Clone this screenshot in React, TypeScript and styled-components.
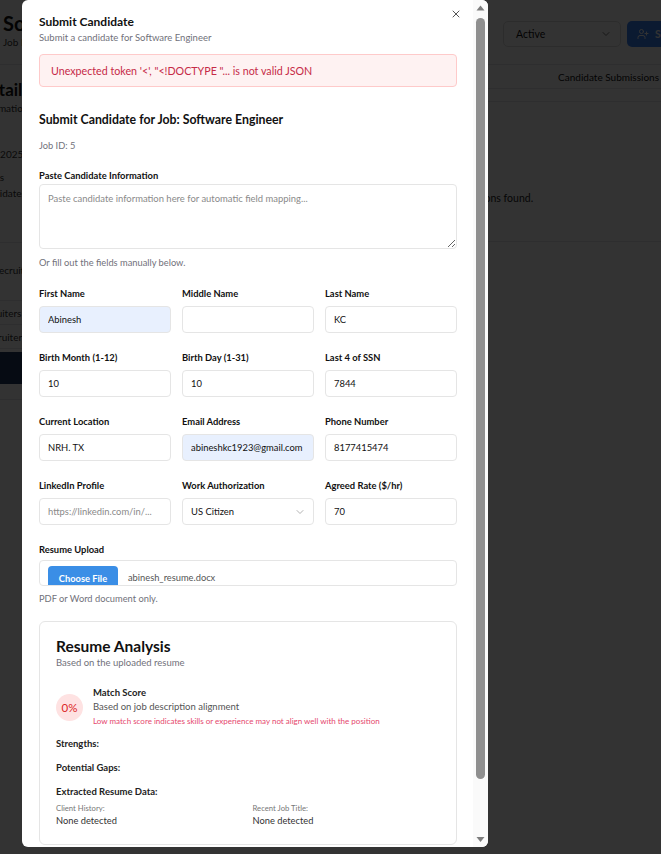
import React from "react";
import styled, { createGlobalStyle } from "styled-components";
import { X, ChevronDown, UserPlus } from "lucide-react";

const FONT = `"Lato", "Noto Sans", "Liberation Sans", sans-serif`;

const Global = createGlobalStyle`
  html, body { margin: 0; padding: 0; }
  body { font-family: ${FONT}; color: #111; background: #fff; }
  * { box-sizing: border-box; }
`;

/* ---------- background page (behind the overlay) ---------- */
const BgPage = styled.div`
  width: 661px;
  height: 854px;
  overflow: hidden;
  background: #fff;
  color: #111;
`;
const BgHeader = styled.header`
  display: flex;
  align-items: flex-start;
  height: 65px;
  padding: 12px 0 0 3px;
  border-bottom: 1px solid #e5e7eb;
`;
const BgTitleBlock = styled.div`
  flex: 1;
  min-width: 0;
`;
const BgTitle = styled.h1`
  margin: 0;
  font-size: 20px;
  line-height: 22px;
  font-weight: 700;
  white-space: nowrap;
`;
const BgSub = styled.div`
  margin-top: 1px;
  font-size: 10px;
  line-height: 14px;
  color: #333;
`;
const BgControls = styled.div`
  display: flex;
  gap: 6px;
  margin: 9px -106px 0 0;
`;
const BgSelect = styled.div`
  width: 118px;
  height: 26px;
  border: 1px solid #ddd;
  border-radius: 5px;
  display: flex;
  align-items: center;
  justify-content: space-between;
  padding: 0 8px 0 12px;
  font-size: 10.5px;
  color: #111;
  svg {
    color: #777;
  }
`;
const BgButton = styled.div`
  width: 140px;
  height: 26px;
  border-radius: 5px;
  background: #3b82f6;
  color: #fff;
  display: flex;
  align-items: center;
  gap: 6px;
  padding-left: 10px;
  font-size: 10.5px;
  font-weight: 700;
`;
const BgBody = styled.div`
  display: flex;
`;
const BgLeft = styled.div`
  flex: none;
  width: 320px;
  margin-left: -23px;
  display: flex;
  flex-direction: column;
`;
const BgRight = styled.div`
  flex: none;
  width: 400px;
  display: flex;
  flex-direction: column;
`;
const BgHeading = styled.h2`
  margin: 14px 0 0;
  font-size: 17px;
  line-height: 22px;
  font-weight: 700;
`;
const BgText = styled.div<{ $mt?: number; $indent?: number }>`
  margin-top: ${(p) => p.$mt ?? 0}px;
  padding-left: ${(p) => p.$indent ?? 0}px;
  font-size: 10px;
  line-height: 14px;
  color: #333;
  white-space: nowrap;
`;
const BgDivider = styled.div<{ $mt?: number }>`
  margin-top: ${(p) => p.$mt ?? 0}px;
  border-top: 1px solid #e5e7eb;
`;
const BgRow = styled.div<{ $indent?: number }>`
  height: 24px;
  display: flex;
  align-items: center;
  gap: 6px;
  padding-left: ${(p) => p.$indent ?? 0}px;
  border-bottom: 1px solid #e5e7eb;
  font-size: 10px;
  color: #333;
  white-space: nowrap;
`;
const BgAvatar = styled.div`
  width: 22px;
  height: 22px;
  border-radius: 50%;
  border: 1px solid #ccc;
`;
const BgBlueBar = styled.div`
  margin-top: 3px;
  height: 32px;
  background: #1e3a5f;
`;
const BgTabs = styled.div`
  height: 24px;
  display: flex;
  justify-content: flex-end;
  align-items: center;
  gap: 110px;
  padding-right: 38px;
  border-bottom: 1px solid #e5e7eb;
  font-size: 10px;
  white-space: nowrap;
`;
const BgPanel = styled.div`
  margin-top: 12px;
  height: 141px;
  border-top: 1px solid #e5e7eb;
  border-bottom: 1px solid #e5e7eb;
  padding: 88px 0 0 132px;
  font-size: 10.5px;
  line-height: 16px;
  color: #222;
  white-space: nowrap;
`;

/* ---------- modal ---------- */
const Overlay = styled.div`
  position: fixed;
  inset: 0;
  background: rgba(0, 0, 0, 0.8);
  z-index: 10;
`;
const Dialog = styled.div`
  position: fixed;
  left: 22px;
  top: 0;
  width: 466px;
  height: 847px;
  background: #fff;
  border-radius: 6px;
  overflow: hidden;
  z-index: 11;
  display: flex;
`;
const DialogBody = styled.div`
  position: relative;
  flex: 1;
  min-width: 0;
  overflow: hidden;
  padding: 13px 16px 16px 17px;
`;
const ScrollBar = styled.div`
  flex: none;
  width: 15px;
  display: flex;
  flex-direction: column;
  background: #fafafa;
`;
const ScrollArrow = styled.div`
  flex: none;
  height: 15px;
  display: flex;
`;
const ScrollTrack = styled.div`
  flex: 1;
  padding-top: 3px;
`;
const ScrollThumb = styled.div`
  width: 9px;
  height: 761px;
  margin: 0 3px;
  border-radius: 4.5px;
  background: #8f8f8f;
`;
const CloseButton = styled.button`
  position: absolute;
  top: 8px;
  right: 11px;
  width: 12px;
  height: 12px;
  padding: 0;
  border: 0;
  background: none;
  color: #555;
  display: flex;
`;
const DialogTitle = styled.h2`
  margin: 0;
  font-size: 12px;
  line-height: 17px;
  font-weight: 700;
  color: #111;
`;
const DialogDesc = styled.p`
  margin: 1px 0 0;
  font-size: 9.5px;
  line-height: 14px;
  color: #71717a;
`;
const ErrorBox = styled.div`
  margin-top: 9px;
  padding: 8px 11px;
  background: #fef2f2;
  border: 1px solid #fecaca;
  border-radius: 4px;
  font-size: 10.7px;
  line-height: 15px;
  color: #c62a47;
`;
const SectionTitle = styled.h3`
  margin: 24px 0 0;
  font-size: 12.3px;
  line-height: 18px;
  font-weight: 700;
  color: #111;
`;
const Muted = styled.p<{ $mt: number }>`
  margin: ${(p) => p.$mt}px 0 0;
  font-size: 9.3px;
  line-height: 14px;
  color: #71717a;
`;
const FieldLabel = styled.label`
  display: block;
  font-size: 9.4px;
  line-height: 14px;
  font-weight: 700;
  color: #111;
`;
const PasteBlock = styled.div`
  margin-top: 16px;
  display: flex;
  flex-direction: column;
  gap: 1px;
`;
const TextArea = styled.textarea`
  display: block;
  width: 100%;
  height: 65px;
  padding: 7px 8px;
  border: 1px solid #e5e5e5;
  border-radius: 4px;
  font-family: ${FONT};
  font-size: 9.45px;
  line-height: 14px;
  color: #111;
  resize: vertical;
  outline: none;
  &::placeholder {
    color: #8a8a8a;
  }
`;
const FormGrid = styled.div`
  margin-top: 17px;
  display: grid;
  grid-template-columns: repeat(3, 1fr);
  column-gap: 11px;
  row-gap: 18px;
`;
const Field = styled.div`
  display: flex;
  flex-direction: column;
  gap: 5px;
  min-width: 0;
`;
const Input = styled.input<{ $autofill?: boolean }>`
  display: block;
  width: 100%;
  height: 27px;
  padding: 0 8px;
  border: 1px solid #e5e5e5;
  border-radius: 4px;
  background: ${(p) => (p.$autofill ? "#e8f0fe" : "#fff")};
  font-family: ${FONT};
  font-size: 9.4px;
  color: #111;
  outline: none;
  &::placeholder {
    color: #8a8a8a;
  }
`;
const SelectBox = styled.div`
  height: 27px;
  display: flex;
  align-items: center;
  justify-content: space-between;
  padding: 0 7px 0 8px;
  border: 1px solid #e5e5e5;
  border-radius: 4px;
  font-size: 9.4px;
  color: #111;
  svg {
    color: #9a9a9a;
  }
`;
const UploadBlock = styled.div`
  margin-top: 18px;
  display: flex;
  flex-direction: column;
  gap: 3px;
`;
const FileBox = styled.div`
  height: 26px;
  display: flex;
  align-items: flex-start;
  gap: 10px;
  padding: 5px 0 0 8px;
  border: 1px solid #e5e5e5;
  border-radius: 4px;
  overflow: hidden;
`;
const FileButton = styled.span`
  flex: none;
  width: 70px;
  height: 24px;
  display: flex;
  align-items: center;
  justify-content: center;
  background: #3a8ee6;
  border-radius: 4px;
  color: #fff;
  font-size: 9.3px;
  font-weight: 700;
`;
const FileName = styled.span`
  line-height: 24px;
  font-size: 9.3px;
  color: #555;
`;
const Card = styled.section`
  margin-top: 15px;
  padding: 14px 16px 16px;
  border: 1px solid #e5e5e5;
  border-radius: 6px;
`;
const CardTitle = styled.h3`
  margin: 0;
  font-size: 15.5px;
  line-height: 20px;
  font-weight: 700;
  color: #111;
`;
const CardDesc = styled.p`
  margin: 0;
  font-size: 9.5px;
  line-height: 14px;
  color: #71717a;
`;
const ScoreRow = styled.div`
  margin-top: 16px;
  display: flex;
  align-items: center;
  gap: 10px;
`;
const ScoreCircle = styled.div`
  flex: none;
  width: 27px;
  height: 27px;
  border-radius: 50%;
  background: #fee2e2;
  color: #dc2626;
  display: flex;
  align-items: center;
  justify-content: center;
  font-size: 11.5px;
`;
const ScoreText = styled.div`
  display: flex;
  flex-direction: column;
`;
const ScoreTitle = styled.div`
  font-size: 9.5px;
  line-height: 14px;
  font-weight: 700;
  color: #222;
`;
const ScoreDesc = styled.div`
  font-size: 9.5px;
  line-height: 14px;
  color: #555;
`;
const ScoreWarn = styled.div`
  font-size: 8px;
  line-height: 14px;
  color: #e5486d;
  white-space: nowrap;
`;
const AnalysisLabel = styled.div<{ $mt: number }>`
  margin-top: ${(p) => p.$mt}px;
  font-size: 9.5px;
  line-height: 14px;
  font-weight: 700;
  color: #222;
`;
const DataGrid = styled.div`
  margin-top: 4px;
  display: grid;
  grid-template-columns: 1fr 1fr;
  column-gap: 9px;
`;
const DataKey = styled.div`
  font-size: 7.7px;
  line-height: 11px;
  color: #777;
`;
const DataValue = styled.div`
  font-size: 9.3px;
  line-height: 14px;
  color: #333;
`;
const Footer = styled.div`
  margin-top: 16px;
  display: flex;
  justify-content: flex-end;
  gap: 8px;
`;
const FooterButton = styled.button<{ $primary?: boolean }>`
  height: 32px;
  padding: 0 14px;
  border-radius: 5px;
  border: 1px solid ${(p) => (p.$primary ? "#3a8ee6" : "#e5e5e5")};
  background: ${(p) => (p.$primary ? "#3a8ee6" : "#fff")};
  color: ${(p) => (p.$primary ? "#fff" : "#111")};
  font-family: ${FONT};
  font-size: 10px;
  font-weight: 700;
`;

type FieldDef =
  | { kind: "input"; label: string; value?: string; placeholder?: string; autofill?: boolean }
  | { kind: "select"; label: string; value: string };

const fields: FieldDef[] = [
  { kind: "input", label: "First Name", value: "Abinesh", autofill: true },
  { kind: "input", label: "Middle Name", value: "" },
  { kind: "input", label: "Last Name", value: "KC" },
  { kind: "input", label: "Birth Month (1-12)", value: "10" },
  { kind: "input", label: "Birth Day (1-31)", value: "10" },
  { kind: "input", label: "Last 4 of SSN", value: "7844" },
  { kind: "input", label: "Current Location", value: "NRH. TX" },
  { kind: "input", label: "Email Address", value: "abineshkc1923@gmail.com", autofill: true },
  { kind: "input", label: "Phone Number", value: "8177415474" },
  { kind: "input", label: "LinkedIn Profile", placeholder: "https://linkedin.com/in/..." },
  { kind: "select", label: "Work Authorization", value: "US Citizen" },
  { kind: "input", label: "Agreed Rate ($/hr)", value: "70" },
];

function Background() {
  return (
    <BgPage>
      <BgHeader>
        <BgTitleBlock>
          <BgTitle>Software Engineer</BgTitle>
          <BgSub>Job ID: 5</BgSub>
        </BgTitleBlock>
        <BgControls>
          <BgSelect>
            Active <ChevronDown size={12} />
          </BgSelect>
          <BgButton>
            <UserPlus size={12} /> Submit Candidate
          </BgButton>
        </BgControls>
      </BgHeader>
      <BgBody>
        <BgLeft>
          <BgHeading>Details</BgHeading>
          <BgText>Information about this job</BgText>
          <BgText $mt={32}>June 2025</BgText>
          <BgText $mt={9}>Status</BgText>
          <BgText $mt={2}>Candidates</BgText>
          <BgDivider $mt={42} />
          <BgText $mt={20} $indent={16}>Recruiters</BgText>
          <BgRow $indent={1}>
            <BgAvatar />
          </BgRow>
          <BgRow>Recruiters</BgRow>
          <BgRow $indent={5}>Recruiter</BgRow>
          <BgBlueBar />
          <BgDivider $mt={15} />
        </BgLeft>
        <BgRight>
          <BgTabs>
            <span>Overview</span>
            <span>Candidate Submissions</span>
          </BgTabs>
          <BgPanel>No submissions found.</BgPanel>
        </BgRight>
      </BgBody>
    </BgPage>
  );
}

export default function App() {
  return (
    <>
      <Global />
      <Background />
      <Overlay />
      <Dialog role="dialog">
        <DialogBody>
          <CloseButton aria-label="Close">
            <X size={12} strokeWidth={2} />
          </CloseButton>
          <DialogTitle>Submit Candidate</DialogTitle>
          <DialogDesc>Submit a candidate for Software Engineer</DialogDesc>
          <ErrorBox>Unexpected token '&lt;', "&lt;!DOCTYPE "... is not valid JSON</ErrorBox>

          <SectionTitle>Submit Candidate for Job: Software Engineer</SectionTitle>
          <Muted $mt={10}>Job ID: 5</Muted>

          <PasteBlock>
            <FieldLabel>Paste Candidate Information</FieldLabel>
            <TextArea placeholder="Paste candidate information here for automatic field mapping..." />
          </PasteBlock>
          <Muted $mt={7}>Or fill out the fields manually below.</Muted>

          <FormGrid>
            {fields.map((f) => (
              <Field key={f.label}>
                <FieldLabel>{f.label}</FieldLabel>
                {f.kind === "select" ? (
                  <SelectBox>
                    {f.value}
                    <ChevronDown size={12} strokeWidth={1.5} />
                  </SelectBox>
                ) : (
                  <Input
                    $autofill={f.autofill}
                    defaultValue={f.value}
                    placeholder={f.placeholder}
                  />
                )}
              </Field>
            ))}
          </FormGrid>

          <UploadBlock>
            <FieldLabel>Resume Upload</FieldLabel>
            <FileBox>
              <FileButton>Choose File</FileButton>
              <FileName>abinesh_resume.docx</FileName>
            </FileBox>
          </UploadBlock>
          <Muted $mt={6}>PDF or Word document only.</Muted>

          <Card>
            <CardTitle>Resume Analysis</CardTitle>
            <CardDesc>Based on the uploaded resume</CardDesc>
            <ScoreRow>
              <ScoreCircle>0%</ScoreCircle>
              <ScoreText>
                <ScoreTitle>Match Score</ScoreTitle>
                <ScoreDesc>Based on job description alignment</ScoreDesc>
                <ScoreWarn>
                  Low match score indicates skills or experience may not align well with the position
                </ScoreWarn>
              </ScoreText>
            </ScoreRow>
            <AnalysisLabel $mt={9}>Strengths:</AnalysisLabel>
            <AnalysisLabel $mt={10}>Potential Gaps:</AnalysisLabel>
            <AnalysisLabel $mt={10}>Extracted Resume Data:</AnalysisLabel>
            <DataGrid>
              <div>
                <DataKey>Client History:</DataKey>
                <DataValue>None detected</DataValue>
              </div>
              <div>
                <DataKey>Recent Job Title:</DataKey>
                <DataValue>None detected</DataValue>
              </div>
            </DataGrid>
          </Card>

          <Footer>
            <FooterButton>Cancel</FooterButton>
            <FooterButton $primary>Submit Candidate</FooterButton>
          </Footer>
        </DialogBody>
        <ScrollBar aria-hidden="true">
          <ScrollArrow>
            <svg width="15" height="15" viewBox="0 0 15 15">
              <polygon points="3.5,10.5 7.5,5.5 11.5,10.5" fill="#7d7d7d" />
            </svg>
          </ScrollArrow>
          <ScrollTrack>
            <ScrollThumb />
          </ScrollTrack>
          <ScrollArrow>
            <svg width="15" height="15" viewBox="0 0 15 15">
              <polygon points="3.5,5 11.5,5 7.5,10" fill="#7d7d7d" />
            </svg>
          </ScrollArrow>
        </ScrollBar>
      </Dialog>
    </>
  );
}
